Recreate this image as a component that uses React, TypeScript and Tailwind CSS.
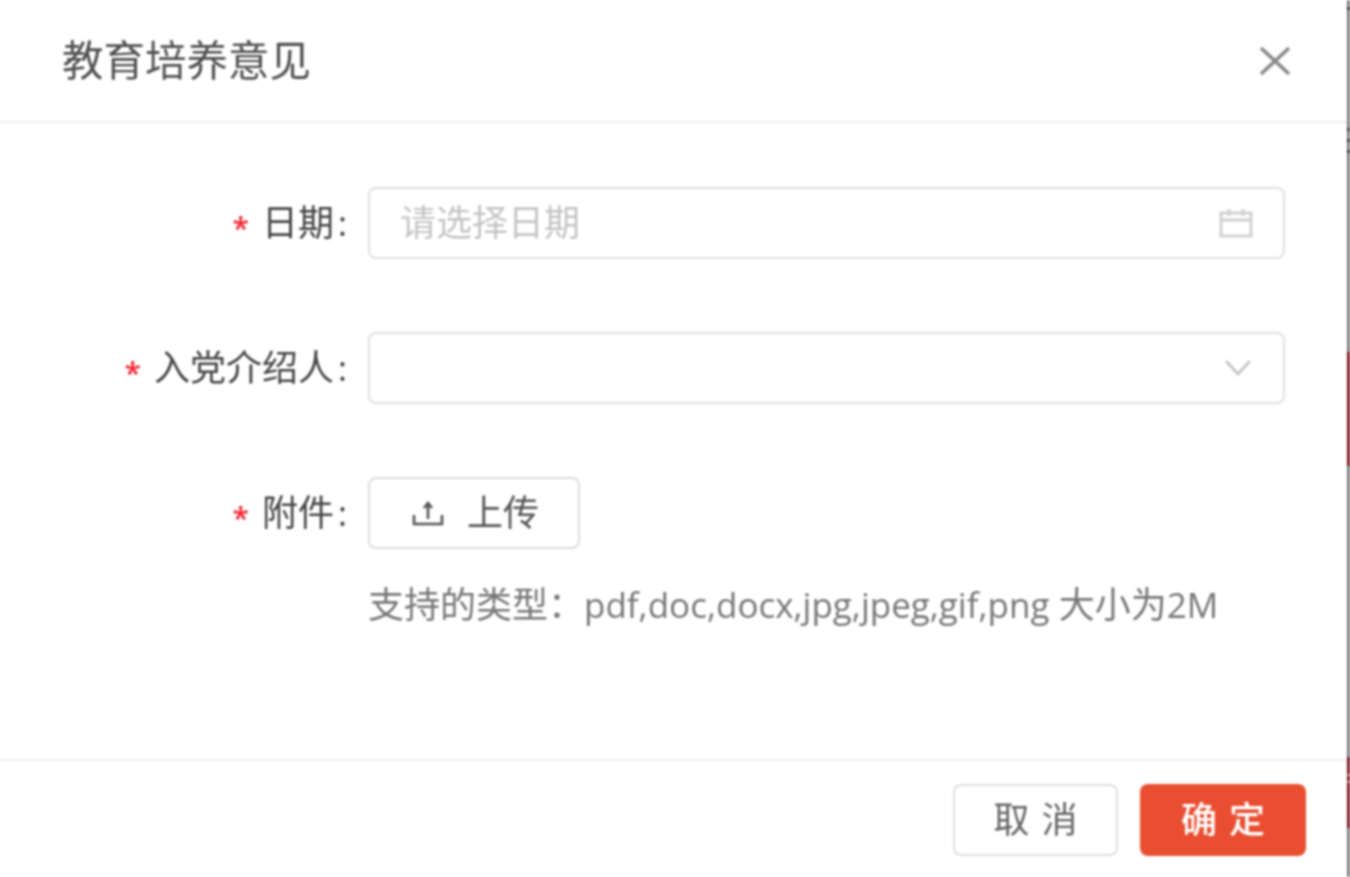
const font = {
  fontFamily: '"Open Sans", "Noto Sans CJK SC", sans-serif',
};

const edge: { h: number; color: string }[] = [
  { h: 7, color: "bg-[#7c7c7c]" },
  { h: 3, color: "bg-[#333333]" },
  { h: 118, color: "bg-[#7c7c7c]" },
  { h: 3, color: "bg-[#333333]" },
  { h: 8, color: "bg-[#7c7c7c]" },
  { h: 3, color: "bg-[#333333]" },
  { h: 8, color: "bg-[#7c7c7c]" },
  { h: 3, color: "bg-[#333333]" },
  { h: 199, color: "bg-[#7c7c7c]" },
  { h: 114, color: "bg-[#7a1420]" },
  { h: 291, color: "bg-[#7c7c7c]" },
  { h: 17, color: "bg-[#7a1420]" },
  { h: 2, color: "bg-[#b08a8a]" },
  { h: 5, color: "bg-[#7a1420]" },
  { h: 2, color: "bg-[#b08a8a]" },
  { h: 45, color: "bg-[#7a1420]" },
  { h: 49, color: "bg-[#7c7c7c]" },
];

function Label({ text }: { text: string }) {
  return (
    <div className="w-[350px] shrink-0 flex justify-end items-center h-[72px] leading-none text-[#444444]">
      <span className="text-[#f5222d] text-[30px] font-semibold mr-[13px] mt-[10px]">*</span>
      <span className="text-[36px]">{text}</span>
      <span className="w-[15px] ml-[1px] pl-[3px] text-[34px]">:</span>
    </div>
  );
}

function CalendarIcon() {
  return (
    <svg width="34" height="30" viewBox="0 0 34 30" fill="none" stroke="#cfcfcf" strokeWidth="2.8">
      <rect x="2" y="5" width="30" height="23" />
      <path d="M2 12H32M10 1V8M24 1V8" />
    </svg>
  );
}

function ChevronIcon() {
  return (
    <svg width="28" height="18" viewBox="0 0 28 18" fill="none" stroke="#c4c4c4" strokeWidth="2.6">
      <path d="M2 2L14 15L26 2" />
    </svg>
  );
}

function UploadIcon() {
  return (
    <svg width="32" height="26" viewBox="0 0 32 26" fill="none" stroke="#555555" strokeWidth="2.6">
      <path d="M2 15V24H30V15M16 19V3M12 8L16 3L20 8" />
    </svg>
  );
}

function CloseIcon() {
  return (
    <svg width="32" height="30" viewBox="0 0 32 30" fill="none" stroke="#8a8a8a" strokeWidth="3.6">
      <path d="M2 2L30 28M30 2L2 28" />
    </svg>
  );
}

export default function App() {
  return (
    <div className="w-[1350px] h-[877px] flex overflow-hidden bg-white blur-[1px]" style={font}>
      <div className="w-[1347px] h-full flex flex-col bg-white">
        <div className="h-[123px] shrink-0 border-b-2 border-[#eeeeee] flex items-center justify-between pl-[62px] pr-[56px]">
          <h1 className="text-[41.5px] leading-none text-[#505050] font-normal">教育培养意见</h1>
          <CloseIcon />
        </div>

        <div className="flex-1 pt-[64px]">
          <div className="flex items-start">
            <Label text="日期" />
            <div className="ml-[18px] w-[917px] h-[72px] border-2 border-[#e0e0e0] rounded-[8px] flex items-center justify-between pl-[30px] pr-[30px]">
              <span className="text-[36px] leading-none text-[#c4c4c4]">请选择日期</span>
              <CalendarIcon />
            </div>
          </div>

          <div className="flex items-start mt-[73px]">
            <Label text="入党介绍人" />
            <div className="ml-[18px] w-[917px] h-[72px] border-2 border-[#e0e0e0] rounded-[8px] flex items-center justify-end pr-[31px]">
              <ChevronIcon />
            </div>
          </div>

          <div className="flex items-start mt-[73px]">
            <Label text="附件" />
            <div className="ml-[18px]">
              <button className="w-[212px] h-[72px] pl-[3px] border-2 border-[#dcdcdc] rounded-[8px] flex items-center justify-center gap-[23px] text-[36px] leading-none text-[#555555]">
                <UploadIcon />
                <span>上传</span>
              </button>
              <p className="mt-[38px] text-[36px] leading-none text-[#777777] whitespace-nowrap">
                支持的类型：<span className="text-[35px]">pdf,doc,docx,jpg,jpeg,gif,png</span> 大小为<span className="text-[35px]">2M</span>
              </p>
            </div>
          </div>
        </div>

        <div className="h-[118px] shrink-0 border-t-2 border-[#eeeeee] flex items-start justify-end gap-[22px] pt-[23px] pr-[41px]">
          <button className="w-[165px] h-[72px] pl-[12px] border-2 border-[#e0e0e0] rounded-[8px] text-[36px] leading-none tracking-[12px] text-[#666666]">取消</button>
          <button className="w-[166px] h-[72px] pl-[12px] rounded-[8px] bg-[#e94e30] text-[36px] leading-none tracking-[12px] font-medium text-white">确定</button>
        </div>
      </div>
      <div className="w-[3px] h-full flex flex-col">
        {edge.map((part, i) => (
          <div key={i} className={`shrink-0 ${part.color}`} style={{ height: part.h }} />
        ))}
      </div>
    </div>
  );
}
